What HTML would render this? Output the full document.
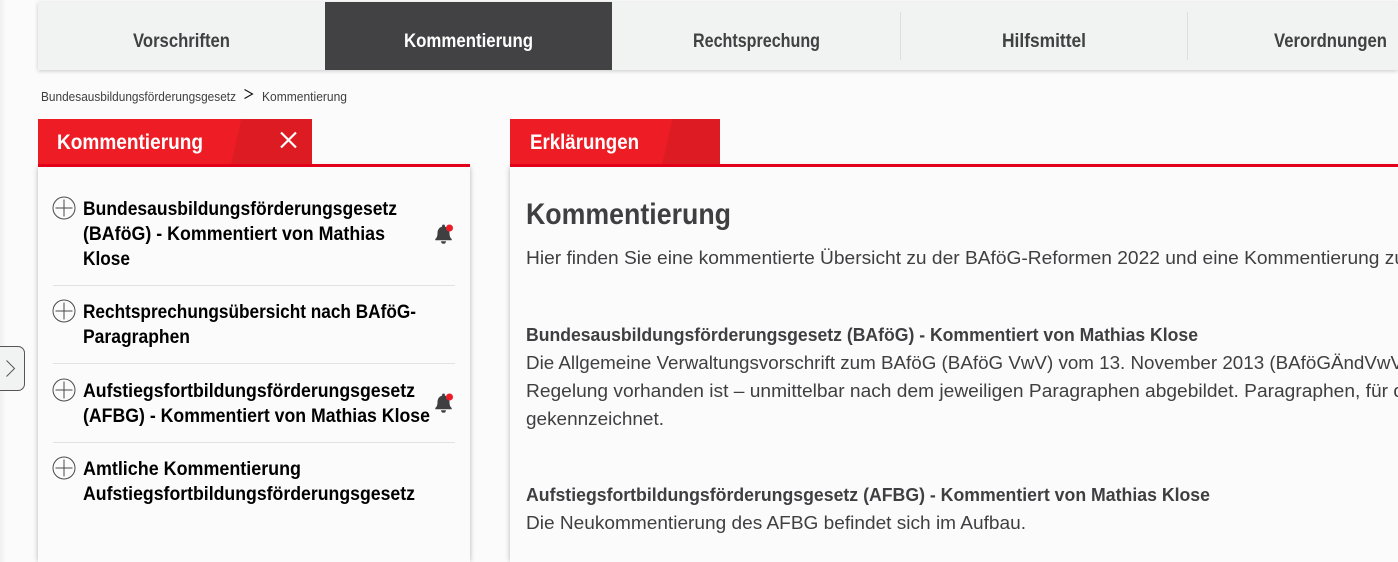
<!DOCTYPE html>
<html lang="de">
<head>
<meta charset="utf-8">
<title>Kommentierung</title>
<style>
html,body{margin:0;padding:0;width:1398px;height:562px;overflow:hidden;background:#fbfbfb}
div{position:absolute;box-sizing:border-box}
#edge{left:0;top:0;width:6px;height:562px;background:linear-gradient(to right,#f0f0f0,#fbfbfb)}
#nav{left:38px;top:2px;width:1360px;height:68px;background:#f1f3f2;box-shadow:0 1px 4px rgba(0,0,0,.2)}
#active{left:325px;top:2px;width:287px;height:68px;background:#424143}
.panel{top:167px;height:395px;background:#fbfbfb;box-shadow:0 0 5px rgba(0,0,0,.28)}
#left{left:38px;width:432px}
#main{left:510px;width:888px}
#toggle{left:-8px;top:346px;width:33px;height:45px;background:#f1f3f2;border:1px solid #555;border-radius:7px;z-index:2}
svg{position:absolute;left:0;top:0;z-index:3}
text{font-family:"Liberation Sans",sans-serif}
.nav{font-size:19.5px;font-weight:bold;fill:#414042}
.crumb{font-size:12.5px;fill:#3f3f41}
.tab{font-size:21.5px;font-weight:bold;fill:#fff}
.item{font-size:19px;font-weight:bold;fill:#000}
.h{font-size:29.5px;font-weight:bold;fill:#3f3f41}
.b{font-size:18.5px;fill:#3f3f41}
.s{font-size:18.5px;font-weight:bold;fill:#3f3f41}
</style>
</head>
<body>
<div id="edge"></div>
<div id="nav"></div>
<div id="active"></div>
<div id="left" class="panel"></div>
<div id="main" class="panel"></div>
<div id="toggle"></div>
<svg width="1398" height="562" viewBox="0 0 1398 562" xmlns="http://www.w3.org/2000/svg">
<defs>
<g id="plus" fill="none" stroke="#4a4a4a" stroke-width="1"><circle cx="0" cy="0" r="11"/><path d="M-8.500 0H8.500M0-8.500V8.500"/></g>
<g id="bell"><path fill="#3f3f41" d="M443.500 224.500a1.400 1.400 0 0 0-1.400 1.400v.7c-3 .8-4.600 3.300-4.600 6.400 0 3.300-.8 4.800-2.200 6v1.300h16.400v-1.300c-1.400-1.200-2.200-2.700-2.200-6 0-3.100-1.600-5.600-4.600-6.400v-.7a1.400 1.400 0 0 0-1.400-1.400z"/><path fill="#3f3f41" d="M441 241.300h5a2.500 2.500 0 0 1-5 0z"/><circle cx="449.500" cy="228" r="3.500" fill="#ee1c25"/></g>
</defs>

<!-- nav -->
<path d="M900.500 12V60M1187.500 12V60" stroke="#dcdfde" stroke-width="1"/>
<text class="nav" x="133" y="47" textLength="97" lengthAdjust="spacingAndGlyphs">Vorschriften</text>
<text class="nav" x="404" y="47" textLength="129" lengthAdjust="spacingAndGlyphs" style="fill:#fff">Kommentierung</text>
<text class="nav" x="693" y="47" textLength="127" lengthAdjust="spacingAndGlyphs">Rechtsprechung</text>
<text class="nav" x="1002" y="47" textLength="84" lengthAdjust="spacingAndGlyphs">Hilfsmittel</text>
<text class="nav" x="1274" y="47" textLength="113" lengthAdjust="spacingAndGlyphs">Verordnungen</text>

<!-- breadcrumb -->
<text class="crumb" x="41" y="101" textLength="195" lengthAdjust="spacingAndGlyphs">Bundesausbildungsförderungsgesetz</text>
<path d="M244.500 89.500L252.500 94L244.500 98.500" fill="none" stroke="#111" stroke-width="1.100"/>
<text class="crumb" x="262" y="101" textLength="85" lengthAdjust="spacingAndGlyphs">Kommentierung</text>

<!-- tabs -->
<rect x="38" y="119" width="274" height="46" fill="#ee1c25"/>
<path d="M241.500 119H312V165H231z" fill="#dc1b22"/>
<rect x="510" y="119" width="210" height="46" fill="#ee1c25"/>
<path d="M672.500 119H720V165H662z" fill="#dc1b22"/>
<rect x="38" y="164" width="432" height="3" fill="#e2001a"/>
<rect x="510" y="164" width="888" height="3" fill="#e2001a"/>
<text class="tab" x="57" y="149" textLength="146" lengthAdjust="spacingAndGlyphs">Kommentierung</text>
<text class="tab" x="530" y="149" textLength="109" lengthAdjust="spacingAndGlyphs">Erklärungen</text>
<path d="M281 132.500L296 147.500M296 132.500L281 147.500" stroke="#fff" stroke-width="2.200"/>

<!-- toggle chevron -->
<path d="M6.500 360.500L14.500 368.500L6.500 376.500" fill="none" stroke="#555" stroke-width="1"/>

<!-- left list -->
<use href="#plus" x="64" y="208"/>
<text class="item" x="83" y="215" textLength="314" lengthAdjust="spacingAndGlyphs">Bundesausbildungsförderungsgesetz</text>
<text class="item" x="83" y="240" textLength="302" lengthAdjust="spacingAndGlyphs">(BAföG) - Kommentiert von Mathias</text>
<text class="item" x="83" y="265" textLength="47" lengthAdjust="spacingAndGlyphs">Klose</text>
<use href="#bell"/>
<rect x="53" y="285" width="402" height="1" fill="#e2e2e2"/>
<use href="#plus" x="64" y="311"/>
<text class="item" x="83" y="318" textLength="333" lengthAdjust="spacingAndGlyphs">Rechtsprechungsübersicht nach BAföG-</text>
<text class="item" x="83" y="343" textLength="107" lengthAdjust="spacingAndGlyphs">Paragraphen</text>
<rect x="53" y="363" width="402" height="1" fill="#e2e2e2"/>
<use href="#plus" x="64" y="390"/>
<text class="item" x="83" y="397" textLength="332" lengthAdjust="spacingAndGlyphs">Aufstiegsfortbildungsförderungsgesetz</text>
<text class="item" x="83" y="422" textLength="347" lengthAdjust="spacingAndGlyphs">(AFBG) - Kommentiert von Mathias Klose</text>
<use href="#bell" y="169"/>
<rect x="53" y="442" width="402" height="1" fill="#e2e2e2"/>
<use href="#plus" x="64" y="468"/>
<text class="item" x="83" y="475" textLength="218" lengthAdjust="spacingAndGlyphs">Amtliche Kommentierung</text>
<text class="item" x="83" y="500" textLength="332" lengthAdjust="spacingAndGlyphs">Aufstiegsfortbildungsförderungsgesetz</text>

<!-- main -->
<text class="h" x="526" y="224" textLength="205" lengthAdjust="spacingAndGlyphs">Kommentierung</text>
<text class="b" x="526" y="264" textLength="879" lengthAdjust="spacingAndGlyphs">Hier finden Sie eine kommentierte Übersicht zu der BAföG-Reformen 2022 und eine Kommentierung zu</text>
<text class="s" x="526" y="341" textLength="672" lengthAdjust="spacingAndGlyphs">Bundesausbildungsförderungsgesetz (BAföG) - Kommentiert von Mathias Klose</text>
<text class="b" x="526" y="369" textLength="877" lengthAdjust="spacingAndGlyphs">Die Allgemeine Verwaltungsvorschrift zum BAföG (BAföG VwV) vom 13. November 2013 (BAföGÄndVwV</text>
<text class="b" x="526" y="397" textLength="878" lengthAdjust="spacingAndGlyphs">Regelung vorhanden ist – unmittelbar nach dem jeweiligen Paragraphen abgebildet. Paragraphen, für d</text>
<text class="b" x="526" y="425" textLength="138" lengthAdjust="spacingAndGlyphs">gekennzeichnet.</text>
<text class="s" x="526" y="501" textLength="684" lengthAdjust="spacingAndGlyphs">Aufstiegsfortbildungsförderungsgesetz (AFBG) - Kommentiert von Mathias Klose</text>
<text class="b" x="526" y="529" textLength="500" lengthAdjust="spacingAndGlyphs">Die Neukommentierung des AFBG befindet sich im Aufbau.</text>
</svg>
</body>
</html>
